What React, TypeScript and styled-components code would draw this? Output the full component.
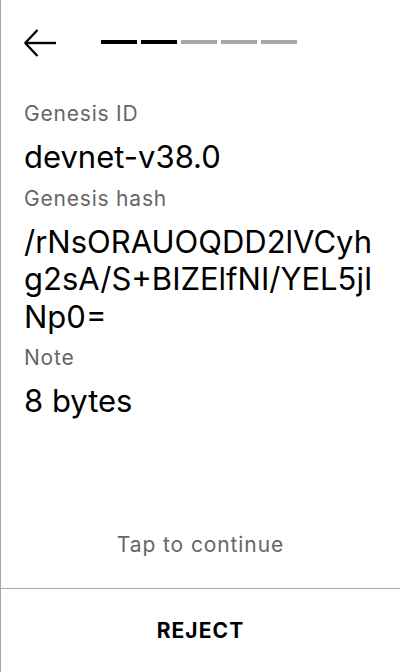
import React from 'react';
import styled, { createGlobalStyle } from 'styled-components';

const GlobalStyle = createGlobalStyle`
  html, body {
    margin: 0;
    padding: 0;
    background: #ffffff;
  }
  body {
    font-family: Inter, "Noto Sans", sans-serif;
    color: #000000;
  }
`;

const Screen = styled.div`
  width: 400px;
  height: 672px;
  box-sizing: border-box;
  border-left: 1px solid #a8a8a8;
  display: flex;
  flex-direction: column;
  background: #ffffff;
`;

const Header = styled.div`
  height: 86px;
  display: flex;
  align-items: center;
  padding: 0 0 0 23px;
  gap: 43px;
`;

const BackButton = styled.button`
  width: 34px;
  height: 34px;
  padding: 0;
  border: none;
  background: none;
  display: flex;
  align-items: center;
  justify-content: center;
  cursor: pointer;
`;

const Steps = styled.div`
  display: flex;
  gap: 4px;
  margin-top: -2px;
`;

const Step = styled.div<{ $done: boolean }>`
  width: 36px;
  height: 4px;
  background: ${p => (p.$done ? '#000000' : '#a8a8a8')};
`;

const Body = styled.div`
  flex: 1;
  padding: 14px 24px 0 23px;
  display: flex;
  flex-direction: column;
`;

const Label = styled.div`
  font-size: 21px;
  line-height: 28px;
  letter-spacing: 0.8px;
  color: #666666;
  margin-bottom: 10px;
`;

const Value = styled.div`
  font-size: 31px;
  line-height: 37.5px;
  color: #000000;
  word-break: break-all;
  margin-bottom: 9px;
`;

const TapHint = styled.div`
  font-size: 21px;
  line-height: 28px;
  letter-spacing: 0.9px;
  color: #666666;
  text-align: center;
  padding-bottom: 29px;
`;

const Footer = styled.div`
  height: 83px;
  border-top: 1px solid #a8a8a8;
  display: flex;
  align-items: center;
  justify-content: center;
`;

const RejectButton = styled.button`
  border: none;
  background: none;
  font-family: Inter, "Noto Sans", sans-serif;
  font-size: 21px;
  font-weight: 700;
  color: #000000;
  letter-spacing: 1.1px;
  cursor: pointer;
`;

const ArrowLeft = () => (
  <svg width="34" height="34" viewBox="0 0 34 34" fill="none">
    <path d="M1 17 H32" stroke="#000" strokeWidth="2.4" />
    <path d="M13.5 4 L1.2 17 L13.5 30" stroke="#000" strokeWidth="2.4" strokeLinejoin="bevel" />
  </svg>
);

const fields = [
  { label: 'Genesis ID', value: 'devnet-v38.0' },
  { label: 'Genesis hash', value: '/rNsORAUOQDD2lVCyhg2sA/S+BIZElfNI/YEL5jINp0=' },
  { label: 'Note', value: '8 bytes' },
];

export default function App() {
  const steps = [true, true, false, false, false];
  return (
    <>
      <GlobalStyle />
      <Screen>
        <Header>
          <BackButton aria-label="Back">
            <ArrowLeft />
          </BackButton>
          <Steps>
            {steps.map((done, i) => (
              <Step key={i} $done={done} />
            ))}
          </Steps>
        </Header>
        <Body>
          {fields.map(f => (
            <React.Fragment key={f.label}>
              <Label>{f.label}</Label>
              <Value>{f.value}</Value>
            </React.Fragment>
          ))}
        </Body>
        <TapHint>Tap to continue</TapHint>
        <Footer>
          <RejectButton>REJECT</RejectButton>
        </Footer>
      </Screen>
    </>
  );
}
